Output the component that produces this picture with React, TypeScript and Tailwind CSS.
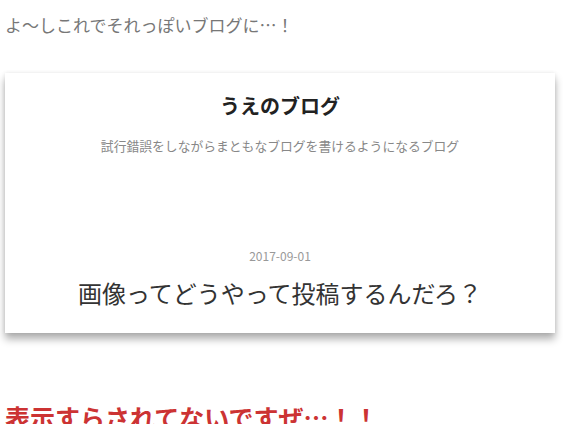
export default function App() {
  return (
    <div
      className="min-h-screen bg-white pt-[13px]"
      style={{ fontFamily: '"Noto Sans CJK JP", "Noto Sans", sans-serif' }}
    >
      <p className="ml-[5px] text-[17px] leading-[24px] text-[#777]">
        よ～しこれでそれっぽいブログに…！
      </p>

      {/* blog card */}
      <div className="mt-[36px] ml-[5px] w-[550px] bg-white pt-[19px] pb-[24px] text-center shadow-[0_6px_8px_rgba(0,0,0,0.32),0_0_4px_rgba(0,0,0,0.08)]">
        <h1 className="text-[20px] leading-[28px] font-bold text-[#222]">うえのブログ</h1>
        <p className="mt-[16px] text-[12.8px] leading-[20px] text-[#888]">
          試行錯誤をしながらまともなブログを書けるようになるブログ
        </p>
        <div className="mt-[91px] text-[12px] leading-[18px] text-[#999]">2017-09-01</div>
        <h2 className="mt-[12px] text-[24px] leading-[32px] text-[#333]">
          画像ってどうやって投稿するんだろ？
        </h2>
      </div>

      <h3 className="mt-[67px] ml-[5px] text-[25px] leading-[34px] font-bold text-[#cc3333]">
        表示すらされてないですぜ…！！
      </h3>
    </div>
  );
}
